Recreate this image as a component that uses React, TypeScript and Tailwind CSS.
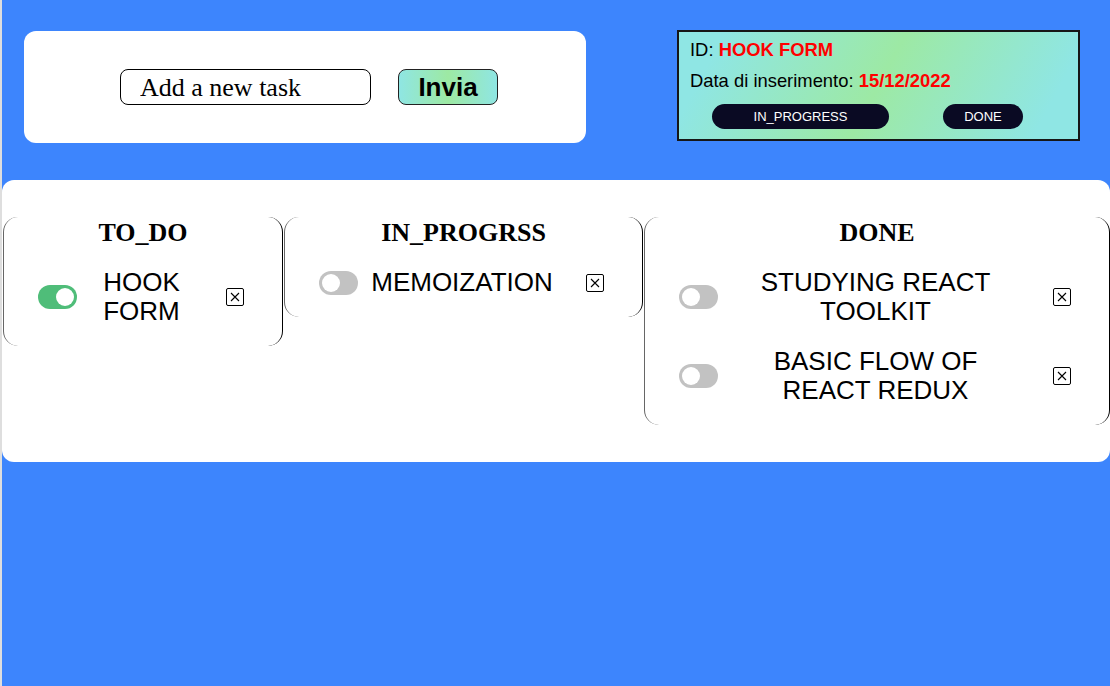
import { useState } from "react";

type Task = { id: string; title: string; done: boolean };

const columns: { name: string; width: string; tasks: Task[] }[] = [
  { name: "TO_DO", width: "w-[280px]", tasks: [{ id: "1", title: "HOOK FORM", done: true }] },
  { name: "IN_PROGRSS", width: "w-[359px]", tasks: [{ id: "2", title: "MEMOIZATION", done: false }] },
  {
    name: "DONE",
    width: "w-[466px]",
    tasks: [
      { id: "3", title: "STUDYING REACT TOOLKIT", done: false },
      { id: "4", title: "BASIC FLOW OF REACT REDUX", done: false },
    ],
  },
];

function Toggle({ on }: { on: boolean }) {
  const [checked, setChecked] = useState(on);
  return (
    <button
      onClick={() => setChecked(!checked)}
      className={`relative shrink-0 w-[39px] h-[24px] rounded-full transition-colors ${
        checked ? "bg-[#4fbd79]" : "bg-[#c2c2c2]"
      }`}
    >
      <span
        className={`absolute top-[3px] w-[18px] h-[18px] rounded-full bg-white transition-all ${
          checked ? "left-[18px]" : "left-[3px]"
        }`}
      />
    </button>
  );
}

function TaskRow({ task }: { task: Task }) {
  return (
    <div className="flex items-center pl-[34px] pr-[38px]">
      <Toggle on={task.done} />
      <div className="flex-1 pr-[20px]">
        <p className="mx-auto max-w-[280px] text-center text-[26px] leading-[29px] text-black">{task.title}</p>
      </div>
      <button className="shrink-0 w-[18px] h-[18px] flex items-center justify-center border border-black rounded-[2px] bg-white">
        <svg width="10" height="10" viewBox="0 0 10 10" stroke="black" strokeWidth="1.1">
          <path d="M1 1 L9 9 M9 1 L1 9" />
        </svg>
      </button>
    </div>
  );
}

export default function App() {
  return (
    <div className="flex min-h-[686px] font-['Liberation_Sans',Arial,sans-serif]">
      {/* left edge strip */}
      <div className="w-[2px] bg-[#dedede] shrink-0" />

      <div className="flex-1 bg-[#3d85fd] overflow-hidden">
        {/* top row */}
        <div className="flex items-start pt-[30px]">
          <div className="ml-[22px] mt-px w-[562px] h-[112px] bg-white rounded-[12px] flex items-center justify-center pl-2 gap-[27px]">
            <input
              placeholder="Add a new task"
              className="w-[251px] h-[36px] border border-black rounded-[8px] pl-[19px] text-[26px] font-['Liberation_Serif',serif] placeholder:text-black outline-none"
            />
            <button className="w-[100px] h-[36px] border border-[#222] rounded-[8px] bg-[linear-gradient(90deg,#8fe6e3,#9de9a3,#8fe6e3)] text-[26px] font-bold leading-none text-black">
              Invia
            </button>
          </div>

          <div className="ml-[91px] w-[403px] h-[111px] border-2 border-[#161616] bg-[linear-gradient(118deg,#8fe6e4_10%,#9de9a4_50%,#8fe6e4_90%)] px-[11px] pt-[7px]">
            <p className="text-[18.4px] leading-[21px] text-black">
              ID: <span className="font-bold text-[#ff0000]">HOOK FORM</span>
            </p>
            <p className="mt-[10px] text-[18.4px] leading-[21px] text-black">
              Data di inserimento: <span className="font-bold text-[#ff0000]">15/12/2022</span>
            </p>
            <div className="flex mt-[13px] ml-[22px] gap-[54px]">
              <button className="w-[177px] h-[25px] rounded-full bg-[#0a0a23] text-white text-[13px]">IN_PROGRESS</button>
              <button className="w-[80px] h-[25px] rounded-full bg-[#0a0a23] text-white text-[13px]">DONE</button>
            </div>
          </div>
        </div>

        {/* board */}
        <div className="mt-[37px] w-[1108px] bg-white rounded-[12px] py-[37px] pl-px flex items-start gap-px">
          {columns.map((col) => (
            <div
              key={col.name}
              className={`${col.width} shrink-0 border-l border-r border-l-[#666] border-r-black rounded-[15px] pt-[2px] pb-[20px]`}
            >
              <h2 className="text-center font-bold text-[26px] leading-[28px] font-['Liberation_Serif',serif] text-black">
                {col.name}
              </h2>
              <div className="mt-[21px] flex flex-col gap-[21px]">
                {col.tasks.map((t) => (
                  <TaskRow key={t.id} task={t} />
                ))}
              </div>
            </div>
          ))}
        </div>
      </div>
    </div>
  );
}
